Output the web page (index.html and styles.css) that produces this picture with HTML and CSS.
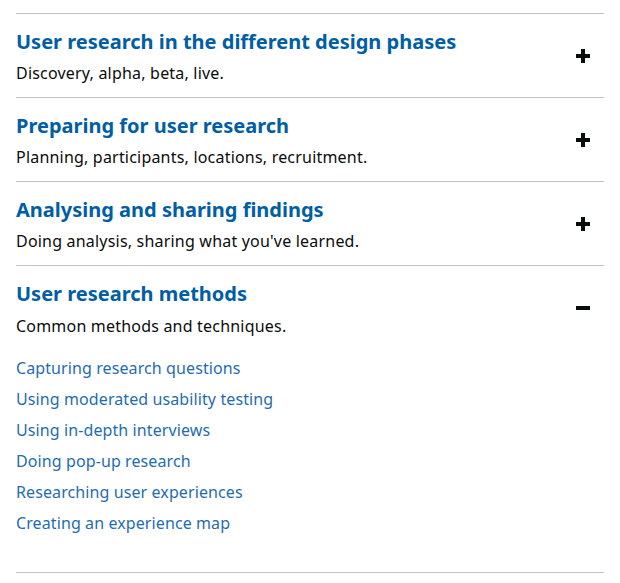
FILE: index.html
```html
<!DOCTYPE html>
<html lang="en">
<head>
<meta charset="utf-8">
<title>User research</title>
<link rel="stylesheet" href="styles.css">
</head>
<body>
<div class="accordion">
  <section class="section">
    <div class="header">
      <div class="text">
        <h2 class="heading">User research in the different design phases</h2>
        <p class="summary">Discovery, alpha, beta, live.</p>
      </div>
      <span class="icon plus"></span>
    </div>
  </section>
  <section class="section">
    <div class="header">
      <div class="text">
        <h2 class="heading">Preparing for user research</h2>
        <p class="summary">Planning, participants, locations, recruitment.</p>
      </div>
      <span class="icon plus"></span>
    </div>
  </section>
  <section class="section">
    <div class="header">
      <div class="text">
        <h2 class="heading">Analysing and sharing findings</h2>
        <p class="summary">Doing analysis, sharing what you've learned.</p>
      </div>
      <span class="icon plus"></span>
    </div>
  </section>
  <section class="section open">
    <div class="header">
      <div class="text">
        <h2 class="heading">User research methods</h2>
        <p class="summary">Common methods and techniques.</p>
      </div>
      <span class="icon minus"></span>
    </div>
    <ul class="links">
      <li><a href="#">Capturing research questions</a></li>
      <li><a href="#">Using moderated usability testing</a></li>
      <li><a href="#">Using in-depth interviews</a></li>
      <li><a href="#">Doing pop-up research</a></li>
      <li><a href="#">Researching user experiences</a></li>
      <li><a href="#">Creating an experience map</a></li>
    </ul>
  </section>
</div>
</body>
</html>
```
FILE: styles.css
```css
html, body {
  margin: 0;
  padding: 0;
  background: #ffffff;
}
body {
  font-family: "Noto Sans", "Liberation Sans", sans-serif;
  color: #0b0c0c;
}
.accordion {
  margin: 13px 16px 0 16px;
  border-bottom: 1px solid #bfc1c3;
}
.section {
  border-top: 1px solid #bfc1c3;
}
.header {
  display: flex;
  align-items: center;
  justify-content: space-between;
  padding: 15px 14px 14px 0;
}
.text {
  display: flex;
  flex-direction: column;
  gap: 9px;
}
.heading {
  margin: 0;
  font-size: 20px;
  line-height: 25px;
  font-weight: 700;
  color: #005ea5;
}
.summary {
  margin: 0;
  font-size: 16px;
  line-height: 20px;
  letter-spacing: 0.2px;
  color: #0b0c0c;
}
.icon {
  position: relative;
  width: 14px;
  height: 14px;
  margin-bottom: 1px;
  flex: none;
}
.icon::before {
  content: "";
  position: absolute;
  left: 0;
  top: 5px;
  width: 14px;
  height: 4px;
  background: #0b0c0c;
}
.plus::after {
  content: "";
  position: absolute;
  left: 5px;
  top: 0;
  width: 4px;
  height: 14px;
  background: #0b0c0c;
}
.open .header {
  padding-bottom: 0;
}
.open .text {
  gap: 10px;
}
.links {
  list-style: none;
  margin: 0;
  padding: 22px 0 39px 0;
  display: flex;
  flex-direction: column;
  gap: 11px;
}
.links li {
  font-size: 16px;
  line-height: 20px;
  letter-spacing: 0.1px;
}
.links a {
  color: #1f6db0;
  text-decoration: none;
}
```
